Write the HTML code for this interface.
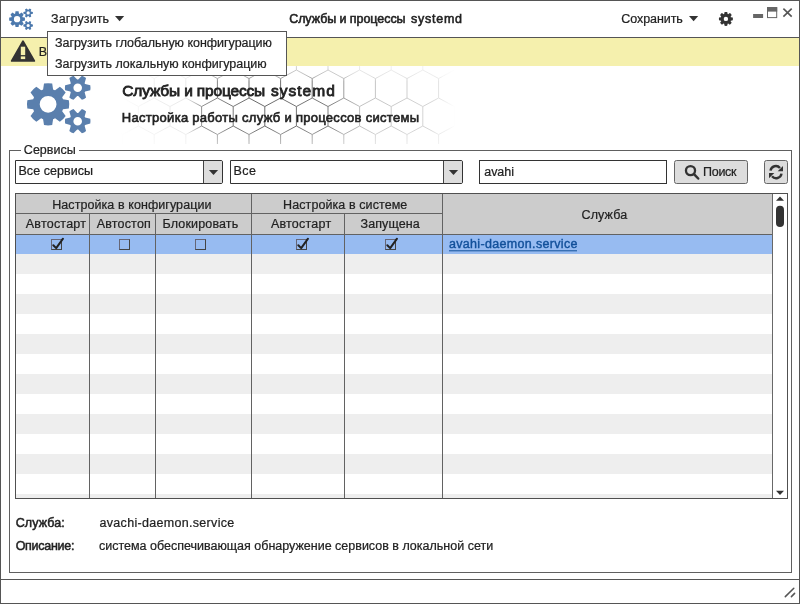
<!DOCTYPE html>
<html lang="ru">
<head>
<meta charset="utf-8">
<title>Службы и процессы systemd</title>
<style>
*{box-sizing:border-box;margin:0;padding:0}
html,body{width:800px;height:604px;overflow:hidden;background:#fff}
body{position:relative;will-change:transform;font-family:"Liberation Sans",sans-serif;font-size:12.5px;color:#222}
.a{position:absolute}
.t{position:absolute;white-space:nowrap;line-height:1;color:#222;-webkit-text-stroke:0.22px currentColor}
.fb{-webkit-text-stroke:0.55px currentColor}
svg{position:absolute;overflow:visible}
#wt{left:0;top:0;width:800px;height:1px;background:#555}
#wl{left:0;top:0;width:1px;height:604px;background:#555}
#wr{left:799px;top:0;width:1px;height:604px;background:#555}
#wb{left:0;top:603px;width:800px;height:1px;background:#555}
#tsep{left:0;top:37px;width:800px;height:1px;background:#555}
#ssep{left:0;top:579px;width:800px;height:1px;background:#555}
#alert{left:1px;top:38px;width:798px;height:28px;background:#f5f0ad}
#menu{left:47px;top:31px;width:240px;height:45px;background:#fff;border:1px solid #555}
#fs{left:9px;top:150px;width:783px;height:423px;border:1px solid #606060}
#fslab{left:20.5px;top:148px;width:58px;height:5px;background:#fff}
.combo{height:24px;border:1px solid #333;background:#fff;top:160px}
.cbtn{top:0;right:0;width:19px;height:22px;background:#ddd;border-left:1px solid #444;border-radius:0 1px 1px 0}
.cr{border-radius:0 2px 2px 0}
.btn{top:160px;height:24px;background:#ddd;border:1px solid #666;border-radius:2.5px}
#tbl{left:15px;top:193px;width:773px;height:306px;border:1px solid #505050;background:#fff;overflow:hidden}
.hd{background:#ccc}
.vl{width:1px;background:#626262;top:0;height:306px}
.hl{height:1px;background:#626262}
.row{left:0;width:757px;height:20px;background:#eee}
.cb{width:11px;height:11px;border:1px solid #444;border-top-color:#667;border-left-color:#667}
</style>
</head>
<body>

<div class="a" id="alert"></div>
<div class="a" id="tsep"></div><div class="a" id="ssep"></div>
<svg width="800" height="604" viewBox="0 0 800 604" style="left:0;top:0">
<defs>
<linearGradient id="hg" x1="120" x2="455" y1="0" y2="0" gradientUnits="userSpaceOnUse">
<stop offset="0" stop-color="#fff" stop-opacity="0"/><stop offset="0.1" stop-color="#fff" stop-opacity="0.08"/><stop offset="0.2" stop-color="#fff" stop-opacity="0.12"/><stop offset="0.245" stop-color="#fff" stop-opacity="0.6"/><stop offset="0.4" stop-color="#fff" stop-opacity="0.8"/><stop offset="0.62" stop-color="#fff" stop-opacity="0.7"/><stop offset="0.72" stop-color="#fff" stop-opacity="0.33"/><stop offset="0.93" stop-color="#fff" stop-opacity="0.22"/><stop offset="1" stop-color="#fff" stop-opacity="0"/>
</linearGradient>
<mask id="hm" maskUnits="userSpaceOnUse" x="0" y="0" width="800" height="604"><rect x="120" y="66" width="335" height="78" fill="url(#hg)"/></mask>
<linearGradient id="vg" x1="0" x2="0" y1="66" y2="144" gradientUnits="userSpaceOnUse">
<stop offset="0" stop-color="#fff" stop-opacity="0.3"/><stop offset="0.13" stop-color="#fff" stop-opacity="0.5"/><stop offset="0.2" stop-color="#fff" stop-opacity="1"/><stop offset="0.8" stop-color="#fff" stop-opacity="1"/><stop offset="0.9" stop-color="#fff" stop-opacity="0.65"/><stop offset="1" stop-color="#fff" stop-opacity="0.5"/>
</linearGradient>
<mask id="vm" maskUnits="userSpaceOnUse" x="0" y="0" width="800" height="604"><rect x="120" y="66" width="335" height="78" fill="url(#vg)"/></mask>
</defs>
<g mask="url(#vm)"><path d="M75.2 50.5L75.2 70M75.2 70L59.4 78.5M75.2 70L91 78.5M106.8 50.5L106.8 70M106.8 70L91 78.5M106.8 70L122.6 78.5M138.4 50.5L138.4 70M138.4 70L122.6 78.5M138.4 70L154.2 78.5M170 50.5L170 70M170 70L154.2 78.5M170 70L185.8 78.5M201.6 50.5L201.6 70M201.6 70L185.8 78.5M201.6 70L217.4 78.5M233.2 50.5L233.2 70M233.2 70L217.4 78.5M233.2 70L249 78.5M264.8 50.5L264.8 70M264.8 70L249 78.5M264.8 70L280.6 78.5M296.4 50.5L296.4 70M296.4 70L280.6 78.5M296.4 70L312.2 78.5M328 50.5L328 70M328 70L312.2 78.5M328 70L343.8 78.5M359.6 50.5L359.6 70M359.6 70L343.8 78.5M359.6 70L375.4 78.5M391.2 50.5L391.2 70M391.2 70L375.4 78.5M391.2 70L407 78.5M422.8 50.5L422.8 70M422.8 70L407 78.5M422.8 70L438.6 78.5M454.4 50.5L454.4 70M454.4 70L438.6 78.5M454.4 70L470.2 78.5M91 78.5L91 98M91 98L75.2 106.5M91 98L106.8 106.5M122.6 78.5L122.6 98M122.6 98L106.8 106.5M122.6 98L138.4 106.5M154.2 78.5L154.2 98M154.2 98L138.4 106.5M154.2 98L170 106.5M185.8 78.5L185.8 98M185.8 98L170 106.5M185.8 98L201.6 106.5M217.4 78.5L217.4 98M217.4 98L201.6 106.5M217.4 98L233.2 106.5M249 78.5L249 98M249 98L233.2 106.5M249 98L264.8 106.5M280.6 78.5L280.6 98M280.6 98L264.8 106.5M280.6 98L296.4 106.5M312.2 78.5L312.2 98M312.2 98L296.4 106.5M312.2 98L328 106.5M343.8 78.5L343.8 98M343.8 98L328 106.5M343.8 98L359.6 106.5M375.4 78.5L375.4 98M375.4 98L359.6 106.5M375.4 98L391.2 106.5M407 78.5L407 98M407 98L391.2 106.5M407 98L422.8 106.5M438.6 78.5L438.6 98M438.6 98L422.8 106.5M438.6 98L454.4 106.5M470.2 78.5L470.2 98M470.2 98L454.4 106.5M470.2 98L486 106.5M75.2 106.5L75.2 126M75.2 126L59.4 134.5M75.2 126L91 134.5M106.8 106.5L106.8 126M106.8 126L91 134.5M106.8 126L122.6 134.5M138.4 106.5L138.4 126M138.4 126L122.6 134.5M138.4 126L154.2 134.5M170 106.5L170 126M170 126L154.2 134.5M170 126L185.8 134.5M201.6 106.5L201.6 126M201.6 126L185.8 134.5M201.6 126L217.4 134.5M233.2 106.5L233.2 126M233.2 126L217.4 134.5M233.2 126L249 134.5M264.8 106.5L264.8 126M264.8 126L249 134.5M264.8 126L280.6 134.5M296.4 106.5L296.4 126M296.4 126L280.6 134.5M296.4 126L312.2 134.5M328 106.5L328 126M328 126L312.2 134.5M328 126L343.8 134.5M359.6 106.5L359.6 126M359.6 126L343.8 134.5M359.6 126L375.4 134.5M391.2 106.5L391.2 126M391.2 126L375.4 134.5M391.2 126L407 134.5M422.8 106.5L422.8 126M422.8 126L407 134.5M422.8 126L438.6 134.5M454.4 106.5L454.4 126M454.4 126L438.6 134.5M454.4 126L470.2 134.5M91 134.5L91 154M91 154L75.2 162.5M91 154L106.8 162.5M122.6 134.5L122.6 154M122.6 154L106.8 162.5M122.6 154L138.4 162.5M154.2 134.5L154.2 154M154.2 154L138.4 162.5M154.2 154L170 162.5M185.8 134.5L185.8 154M185.8 154L170 162.5M185.8 154L201.6 162.5M217.4 134.5L217.4 154M217.4 154L201.6 162.5M217.4 154L233.2 162.5M249 134.5L249 154M249 154L233.2 162.5M249 154L264.8 162.5M280.6 134.5L280.6 154M280.6 154L264.8 162.5M280.6 154L296.4 162.5M312.2 134.5L312.2 154M312.2 154L296.4 162.5M312.2 154L328 162.5M343.8 134.5L343.8 154M343.8 154L328 162.5M343.8 154L359.6 162.5M375.4 134.5L375.4 154M375.4 154L359.6 162.5M375.4 154L391.2 162.5M407 134.5L407 154M407 154L391.2 162.5M407 154L422.8 162.5M438.6 134.5L438.6 154M438.6 154L422.8 162.5M438.6 154L454.4 162.5M470.2 134.5L470.2 154M470.2 154L454.4 162.5M470.2 154L486 162.5" stroke="#444" stroke-width="1" fill="none" mask="url(#hm)"/></g>
</svg>
<svg width="800" height="604" viewBox="0 0 800 604" style="left:0;top:0"><g transform="translate(17.05 19.15) scale(0.375)" fill="#4c79ad" fill-rule="evenodd"><path d="M14.88 -5L20.75 -4.1A21.15 21.15 0 0 1 20.75 4.1L14.88 5A15.7 15.7 0 0 1 14.06 6.99L17.57 11.77A21.15 21.15 0 0 1 11.77 17.57L6.99 14.06A15.7 15.7 0 0 1 5 14.88L4.1 20.75A21.15 21.15 0 0 1 -4.1 20.75L-5 14.88A15.7 15.7 0 0 1 -6.99 14.06L-11.77 17.57A21.15 21.15 0 0 1 -17.57 11.77L-14.06 6.99A15.7 15.7 0 0 1 -14.88 5L-20.75 4.1A21.15 21.15 0 0 1 -20.75 -4.1L-14.88 -5A15.7 15.7 0 0 1 -14.06 -6.99L-17.57 -11.77A21.15 21.15 0 0 1 -11.77 -17.57L-6.99 -14.06A15.7 15.7 0 0 1 -5 -14.88L-4.1 -20.75A21.15 21.15 0 0 1 4.1 -20.75L5 -14.88A15.7 15.7 0 0 1 6.99 -14.06L11.77 -17.57A21.15 21.15 0 0 1 17.57 -11.77L14.06 -6.99A15.7 15.7 0 0 1 14.88 -5ZM8.4 0A8.4 8.4 0 1 0 -8.4 0A8.4 8.4 0 1 0 8.4 0Z"/><path d="M37.03 -20.25L42.17 -18.95A12.8 12.8 0 0 1 42.17 -14.15L37.03 -12.85A8.3 8.3 0 0 1 36.52 -11.97L37.96 -6.86A12.8 12.8 0 0 1 33.81 -4.46L30.11 -8.27A8.3 8.3 0 0 1 29.09 -8.27L25.39 -4.46A12.8 12.8 0 0 1 21.24 -6.86L22.68 -11.97A8.3 8.3 0 0 1 22.17 -12.85L17.03 -14.15A12.8 12.8 0 0 1 17.03 -18.95L22.17 -20.25A8.3 8.3 0 0 1 22.68 -21.13L21.24 -26.24A12.8 12.8 0 0 1 25.39 -28.64L29.09 -24.83A8.3 8.3 0 0 1 30.11 -24.83L33.81 -28.64A12.8 12.8 0 0 1 37.96 -26.24L36.52 -21.13A8.3 8.3 0 0 1 37.03 -20.25ZM33.9 -16.55A4.3 4.3 0 1 0 25.3 -16.55A4.3 4.3 0 1 0 33.9 -16.55Z"/><path d="M37.03 13.2L42.17 14.5A12.8 12.8 0 0 1 42.17 19.3L37.03 20.6A8.3 8.3 0 0 1 36.52 21.48L37.96 26.59A12.8 12.8 0 0 1 33.81 28.99L30.11 25.18A8.3 8.3 0 0 1 29.09 25.18L25.39 28.99A12.8 12.8 0 0 1 21.24 26.59L22.68 21.48A8.3 8.3 0 0 1 22.17 20.6L17.03 19.3A12.8 12.8 0 0 1 17.03 14.5L22.17 13.2A8.3 8.3 0 0 1 22.68 12.32L21.24 7.21A12.8 12.8 0 0 1 25.39 4.81L29.09 8.62A8.3 8.3 0 0 1 30.11 8.62L33.81 4.81A12.8 12.8 0 0 1 37.96 7.21L36.52 12.32A8.3 8.3 0 0 1 37.03 13.2ZM33.9 16.9A4.3 4.3 0 1 0 25.3 16.9A4.3 4.3 0 1 0 33.9 16.9Z"/></g>
<g transform="translate(48.1 104.3) scale(1)" fill="#5a7fad" fill-rule="evenodd"><path d="M14.88 -5L20.75 -4.1A21.15 21.15 0 0 1 20.75 4.1L14.88 5A15.7 15.7 0 0 1 14.06 6.99L17.57 11.77A21.15 21.15 0 0 1 11.77 17.57L6.99 14.06A15.7 15.7 0 0 1 5 14.88L4.1 20.75A21.15 21.15 0 0 1 -4.1 20.75L-5 14.88A15.7 15.7 0 0 1 -6.99 14.06L-11.77 17.57A21.15 21.15 0 0 1 -17.57 11.77L-14.06 6.99A15.7 15.7 0 0 1 -14.88 5L-20.75 4.1A21.15 21.15 0 0 1 -20.75 -4.1L-14.88 -5A15.7 15.7 0 0 1 -14.06 -6.99L-17.57 -11.77A21.15 21.15 0 0 1 -11.77 -17.57L-6.99 -14.06A15.7 15.7 0 0 1 -5 -14.88L-4.1 -20.75A21.15 21.15 0 0 1 4.1 -20.75L5 -14.88A15.7 15.7 0 0 1 6.99 -14.06L11.77 -17.57A21.15 21.15 0 0 1 17.57 -11.77L14.06 -6.99A15.7 15.7 0 0 1 14.88 -5ZM8.4 0A8.4 8.4 0 1 0 -8.4 0A8.4 8.4 0 1 0 8.4 0Z"/><path d="M37.03 -20.25L42.17 -18.95A12.8 12.8 0 0 1 42.17 -14.15L37.03 -12.85A8.3 8.3 0 0 1 36.52 -11.97L37.96 -6.86A12.8 12.8 0 0 1 33.81 -4.46L30.11 -8.27A8.3 8.3 0 0 1 29.09 -8.27L25.39 -4.46A12.8 12.8 0 0 1 21.24 -6.86L22.68 -11.97A8.3 8.3 0 0 1 22.17 -12.85L17.03 -14.15A12.8 12.8 0 0 1 17.03 -18.95L22.17 -20.25A8.3 8.3 0 0 1 22.68 -21.13L21.24 -26.24A12.8 12.8 0 0 1 25.39 -28.64L29.09 -24.83A8.3 8.3 0 0 1 30.11 -24.83L33.81 -28.64A12.8 12.8 0 0 1 37.96 -26.24L36.52 -21.13A8.3 8.3 0 0 1 37.03 -20.25ZM33.9 -16.55A4.3 4.3 0 1 0 25.3 -16.55A4.3 4.3 0 1 0 33.9 -16.55Z"/><path d="M37.03 13.2L42.17 14.5A12.8 12.8 0 0 1 42.17 19.3L37.03 20.6A8.3 8.3 0 0 1 36.52 21.48L37.96 26.59A12.8 12.8 0 0 1 33.81 28.99L30.11 25.18A8.3 8.3 0 0 1 29.09 25.18L25.39 28.99A12.8 12.8 0 0 1 21.24 26.59L22.68 21.48A8.3 8.3 0 0 1 22.17 20.6L17.03 19.3A12.8 12.8 0 0 1 17.03 14.5L22.17 13.2A8.3 8.3 0 0 1 22.68 12.32L21.24 7.21A12.8 12.8 0 0 1 25.39 4.81L29.09 8.62A8.3 8.3 0 0 1 30.11 8.62L33.81 4.81A12.8 12.8 0 0 1 37.96 7.21L36.52 12.32A8.3 8.3 0 0 1 37.03 13.2ZM33.9 16.9A4.3 4.3 0 1 0 25.3 16.9A4.3 4.3 0 1 0 33.9 16.9Z"/></g>
<path d="M115 16h9.2l-4.6 5.2z" fill="#333"/>
<path d="M689 16h9.2l-4.6 5.2z" fill="#333"/>
<path d="M730.8 17.15L732.78 17.6A7 7 0 0 1 732.78 20.2L730.8 20.65A5.2 5.2 0 0 1 730.6 21.13L731.68 22.84A7 7 0 0 1 729.84 24.68L728.13 23.6A5.2 5.2 0 0 1 727.65 23.8L727.2 25.78A7 7 0 0 1 724.6 25.78L724.15 23.8A5.2 5.2 0 0 1 723.67 23.6L721.96 24.68A7 7 0 0 1 720.12 22.84L721.2 21.13A5.2 5.2 0 0 1 721 20.65L719.02 20.2A7 7 0 0 1 719.02 17.6L721 17.15A5.2 5.2 0 0 1 721.2 16.67L720.12 14.96A7 7 0 0 1 721.96 13.12L723.67 14.2A5.2 5.2 0 0 1 724.15 14L724.6 12.02A7 7 0 0 1 727.2 12.02L727.65 14A5.2 5.2 0 0 1 728.13 14.2L729.84 13.12A7 7 0 0 1 731.68 14.96L730.6 16.67A5.2 5.2 0 0 1 730.8 17.15ZM728.1 18.9A2.2 2.2 0 1 0 723.7 18.9A2.2 2.2 0 1 0 728.1 18.9Z" fill="#333" fill-rule="evenodd"/>
<rect x="753.1" y="14" width="10" height="4" fill="#666"/>
<rect x="767.5" y="7.6" width="9.2" height="10" fill="#fff" stroke="#666" stroke-width="1"/><rect x="767" y="7.1" width="10.2" height="4.5" fill="#666"/>
<path d="M783.4 8.6l8.3 8M791.7 8.6l-8.3 8" stroke="#555" stroke-width="1.6" fill="none"/>
<path d="M23 41.2L34.3 60.9H11.7Z" fill="#333" stroke="#333" stroke-width="1.8" stroke-linejoin="round"/><rect x="20.8" y="46.7" width="4.4" height="8.4" fill="#f5f0ad"/><rect x="20.8" y="56.4" width="4.4" height="2.7" fill="#f5f0ad"/></svg>
<div class="a" id="fs"></div><div class="a" id="fslab"></div>
<div class="a combo cr" style="left:15px;width:208px"><div class="a cbtn"></div></div>
<div class="a combo cr" style="left:230px;width:233px"><div class="a cbtn"></div></div>
<div class="a combo" style="left:479px;width:188px"></div>
<div class="a btn" style="left:674px;width:74px"></div>
<div class="a btn" style="left:764px;width:24px"></div>
<div class="a" id="tbl">
<div class="a hd" style="left:0;top:0;width:757px;height:41px"></div>
<div class="a row" style="top:40px;background:#97bbf1"></div>
<div class="a row" style="top:60px"></div><div class="a row" style="top:100px"></div><div class="a row" style="top:140px"></div><div class="a row" style="top:180px"></div><div class="a row" style="top:220px"></div><div class="a row" style="top:260px"></div><div class="a row" style="top:300px"></div>
<div class="a hl" style="left:0;top:19px;width:427px"></div>
<div class="a hl" style="left:0;top:40px;width:757px"></div>
<div class="a vl" style="left:73px;top:19px"></div>
<div class="a vl" style="left:139px;top:19px"></div>
<div class="a vl" style="left:235px"></div>
<div class="a vl" style="left:328px;top:19px"></div>
<div class="a vl" style="left:426px"></div>
<div class="a vl" style="left:756px;background:#686868"></div>
</div>
<div class="a cb" style="left:51px;top:239px"></div>
<div class="a cb" style="left:119px;top:239px"></div>
<div class="a cb" style="left:195px;top:239px"></div>
<div class="a cb" style="left:296px;top:239px"></div>
<div class="a cb" style="left:385px;top:239px"></div>
<svg width="800" height="604" viewBox="0 0 800 604" style="left:0;top:0"><path d="M53.3 245.2l2.9 2.9l6.8-9.4" stroke="#222" stroke-width="2" fill="none" stroke-linecap="round" stroke-linejoin="round"/>
<path d="M298.3 245.2l2.9 2.9l6.8-9.4" stroke="#222" stroke-width="2" fill="none" stroke-linecap="round" stroke-linejoin="round"/>
<path d="M387.3 245.2l2.9 2.9l6.8-9.4" stroke="#222" stroke-width="2" fill="none" stroke-linecap="round" stroke-linejoin="round"/>
<path d="M208.9 169.9h9.2l-4.6 5z" fill="#333"/><path d="M448.9 169.9h9.2l-4.6 5z" fill="#333"/>
<path d="M776 200.8h8l-4-4.2z" fill="#333"/><rect x="776" y="205.8" width="8" height="21.2" rx="4" fill="#333"/><path d="M776 490.8h8l-4 4.2z" fill="#333"/>
<circle cx="690.5" cy="170.6" r="4.55" stroke="#333" stroke-width="2.3" fill="none"/><path d="M694.2 174.4l4 4.1" stroke="#333" stroke-width="2.5" stroke-linecap="round"/>
<g fill="none" stroke="#333" stroke-width="2.4"><path d="M770.5 170.6a5.4 5.4 0 0 1 9.5-2.6"/><path d="M781.5 173.6a5.4 5.4 0 0 1-9.5 2.6"/></g><path d="M783 165.9v5.3h-5.3z" fill="#333"/><path d="M769 178.3v-5.3h5.3z" fill="#333"/>
<path d="M785.3 596.6L793.8 588.2M791.4 596.6l3.2-3.2" stroke="#555" stroke-width="1.5" stroke-linecap="round" fill="none"/>
<rect x="449" y="250.3" width="128" height="1" fill="#12509a"/></svg>
<span class="t" style="left:51.09px;top:13px;font-size:12.5px;letter-spacing:0.123px">Загрузить</span>
<span class="t" style="left:289.18px;top:13px;font-size:12.5px;letter-spacing:-0.065px;-webkit-text-stroke-width:0.55px">Службы и процессы</span>
<span class="t" style="left:411.11px;top:13px;font-size:12.5px;letter-spacing:0.724px;-webkit-text-stroke-width:0.55px">systemd</span>
<span class="t" style="left:621.37px;top:13px;font-size:12.5px;letter-spacing:-0.075px">Сохранить</span>
<span class="t" style="left:38.68px;top:46px;font-size:12.5px;letter-spacing:0px">В</span>
<span class="t" style="left:122.23px;top:83px;font-size:15.5px;letter-spacing:-0.16px;-webkit-text-stroke-width:0.8px">Службы и процессы</span>
<span class="t" style="left:270.88px;top:83px;font-size:15.5px;letter-spacing:1.029px;-webkit-text-stroke-width:0.8px">systemd</span>
<span class="t" style="left:121.84px;top:111px;font-size:13px;letter-spacing:0.287px;-webkit-text-stroke-width:0.6px">Настройка работы служб и процессов системы</span>
<span class="t" style="left:23.87px;top:144px;font-size:12.5px;letter-spacing:-0.001px">Сервисы</span>
<span class="t" style="left:18.48px;top:165px;font-size:12.5px;letter-spacing:0.045px">Все сервисы</span>
<span class="t" style="left:233.48px;top:165px;font-size:12.5px;letter-spacing:0.437px">Все</span>
<span class="t" style="left:484.28px;top:166px;font-size:12.5px;letter-spacing:-0.056px">avahi</span>
<span class="t" style="left:703.1px;top:166px;font-size:12.5px;letter-spacing:-0.306px">Поиск</span>
<span class="t" style="left:52.18px;top:199px;font-size:12.5px;letter-spacing:0.075px">Настройка в конфигурации</span>
<span class="t" style="left:283.08px;top:199px;font-size:12.5px;letter-spacing:0.086px">Настройка в системе</span>
<span class="t" style="left:25.82px;top:218px;font-size:12.5px;letter-spacing:0.21px">Автостарт</span>
<span class="t" style="left:96.72px;top:218px;font-size:12.5px;letter-spacing:0.181px">Автостоп</span>
<span class="t" style="left:162.58px;top:218px;font-size:12.5px;letter-spacing:0.145px">Блокировать</span>
<span class="t" style="left:270.92px;top:218px;font-size:12.5px;letter-spacing:0.223px">Автостарт</span>
<span class="t" style="left:360.49px;top:218px;font-size:12.5px;letter-spacing:0.103px">Запущена</span>
<span class="t" style="left:581.47px;top:209px;font-size:12.5px;letter-spacing:0.142px">Служба</span>
<span class="t" style="left:448.88px;top:238px;font-size:12.5px;letter-spacing:0.333px;color:#12509a;-webkit-text-stroke-width:0.4px">avahi-daemon.service</span>
<span class="t" style="left:15.65px;top:517px;font-size:12.5px;letter-spacing:0.114px;-webkit-text-stroke-width:0.5px">Служба:</span>
<span class="t" style="left:99.53px;top:517px;font-size:12.5px;letter-spacing:0.309px">avachi-daemon.service</span>
<span class="t" style="left:15.67px;top:540px;font-size:12.5px;letter-spacing:-0.269px;-webkit-text-stroke-width:0.5px">Описание:</span>
<span class="t" style="left:98.95px;top:540px;font-size:12.5px;letter-spacing:0.001px">система обеспечивающая обнаружение сервисов в локальной сети</span>
<div class="a" id="menu"></div>
<span class="t" style="left:55.09px;top:37px;font-size:12.5px;letter-spacing:-0.025px">Загрузить глобальную конфигурацию</span>
<span class="t" style="left:55.09px;top:58px;font-size:12.5px;letter-spacing:-0.022px">Загрузить локальную конфигурацию</span>
<div class="a" id="wt"></div><div class="a" id="wl"></div><div class="a" id="wr"></div><div class="a" id="wb"></div>
</body>
</html>
